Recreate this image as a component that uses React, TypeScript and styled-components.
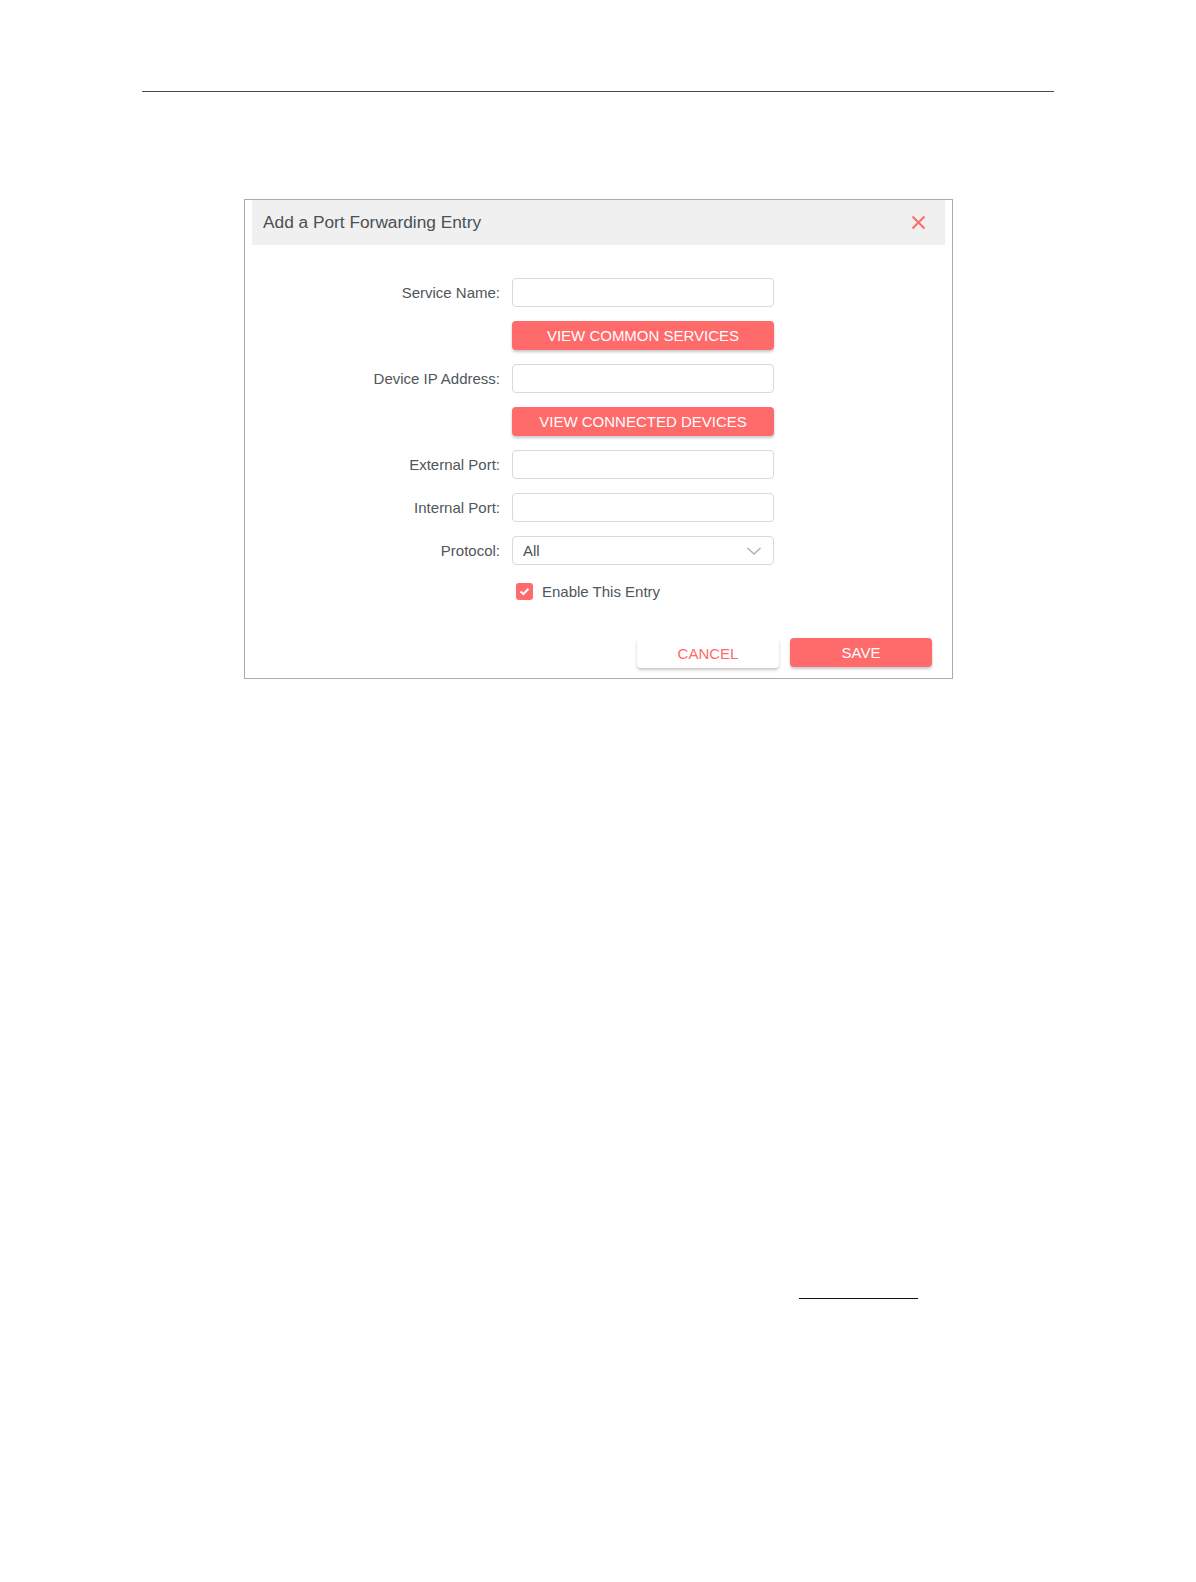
import styled, { createGlobalStyle } from 'styled-components';

const GlobalStyle = createGlobalStyle`
  html, body {
    margin: 0;
    padding: 0;
    background: #ffffff;
    font-family: "Liberation Sans", Arial, sans-serif;
  }
`;

const Page = styled.div`
  width: 1196px;
  min-height: 1582px;
  padding-top: 91px;
  box-sizing: border-box;
`;

const TopRule = styled.div`
  margin-left: 142px;
  width: 912px;
  height: 1px;
  background: #4a4a4a;
`;

const Dialog = styled.div`
  margin: 107px 0 0 244px;
  width: 709px;
  box-sizing: border-box;
  border: 1px solid #ababab;
  padding: 0 7px 10px;
  background: #fff;
`;

const Header = styled.div`
  height: 45px;
  background: #f0f0f0;
  display: flex;
  align-items: center;
  justify-content: space-between;
  padding: 0 19px 0 11px;
`;

const Title = styled.div`
  font-size: 17.3px;
  color: #4b5054;
`;

const CloseButton = styled.button`
  border: 0;
  background: none;
  padding: 0;
  width: 16px;
  height: 16px;
  display: flex;
  align-items: center;
  justify-content: center;
  cursor: pointer;
`;

const Form = styled.div`
  display: grid;
  grid-template-columns: 248px 262px;
  column-gap: 12px;
  row-gap: 14px;
  padding-top: 33px;
`;

const Label = styled.label`
  grid-column: 1;
  justify-self: end;
  align-self: center;
  font-size: 15px;
  color: #50565b;
`;

const Field = styled.div`
  grid-column: 2;
  height: 29px;
  box-sizing: border-box;
  border: 1px solid #d9d9d9;
  border-radius: 4px;
  background: #fff;
  display: flex;
  align-items: center;
  justify-content: space-between;
  padding: 0 11px 0 10px;
  font-size: 15px;
  color: #4b5054;
`;

const ActionButton = styled.button<{ $ghost?: boolean }>`
  height: ${(p) => (p.$ghost ? '30px' : '29px')};
  border: 0;
  border-radius: 4px;
  background: ${(p) => (p.$ghost ? '#ffffff' : '#ff6a6a')};
  color: ${(p) => (p.$ghost ? '#ff6a6a' : '#ffffff')};
  font-family: "Liberation Sans", Arial, sans-serif;
  font-size: 15px;
  text-transform: uppercase;
  box-shadow: 0 2px 3px rgba(0, 0, 0, 0.22);
  cursor: pointer;
  padding: 0;
`;

const FormButton = styled(ActionButton)`
  grid-column: 2;
`;

const CheckRow = styled.div`
  grid-column: 2;
  height: 25px;
  display: flex;
  align-items: center;
  gap: 9px;
  padding-left: 4px;
  font-size: 15px;
  color: #50565b;
`;

const CheckBox = styled.span`
  width: 17px;
  height: 17px;
  border-radius: 3px;
  background: #ff6a6a;
  display: flex;
  align-items: center;
  justify-content: center;
`;

const Footer = styled.div`
  display: flex;
  justify-content: flex-end;
  gap: 11px;
  padding: 34px 13px 0 0;
`;

const FooterButton = styled(ActionButton)`
  width: 142px;
`;

const NoteRule = styled.div`
  margin: 619px 0 0 799px;
  width: 119px;
  height: 1px;
  border-top: 1.5px solid #111;
`;

function Input({ label }: { label: string }) {
  return (
    <>
      <Label>{label}</Label>
      <Field />
    </>
  );
}

export default function App() {
  return (
    <Page>
      <GlobalStyle />
      <TopRule />
      <Dialog>
        <Header>
          <Title>Add a Port Forwarding Entry</Title>
          <CloseButton aria-label="close">
            <svg width="15" height="15" viewBox="0 0 15 15">
              <path d="M1.5 1.5 L13.5 13.5 M13.5 1.5 L1.5 13.5" stroke="#ff6a6a" strokeWidth="2" />
            </svg>
          </CloseButton>
        </Header>
        <Form>
          <Input label="Service Name:" />
          <FormButton>View Common Services</FormButton>
          <Input label="Device IP Address:" />
          <FormButton>View Connected Devices</FormButton>
          <Input label="External Port:" />
          <Input label="Internal Port:" />
          <Label>Protocol:</Label>
          <Field>
            <span>All</span>
            <svg width="16" height="10" viewBox="0 0 16 10">
              <path d="M1.5 2 L8 8 L14.5 2" fill="none" stroke="#b3b3b3" strokeWidth="1.6" />
            </svg>
          </Field>
          <CheckRow>
            <CheckBox>
              <svg width="11" height="9" viewBox="0 0 11 9">
                <path d="M1.5 4.5 L4.3 7 L9.5 1.8" fill="none" stroke="#fff" strokeWidth="2" />
              </svg>
            </CheckBox>
            Enable This Entry
          </CheckRow>
        </Form>
        <Footer>
          <FooterButton $ghost>Cancel</FooterButton>
          <FooterButton>Save</FooterButton>
        </Footer>
      </Dialog>
      <NoteRule />
    </Page>
  );
}
